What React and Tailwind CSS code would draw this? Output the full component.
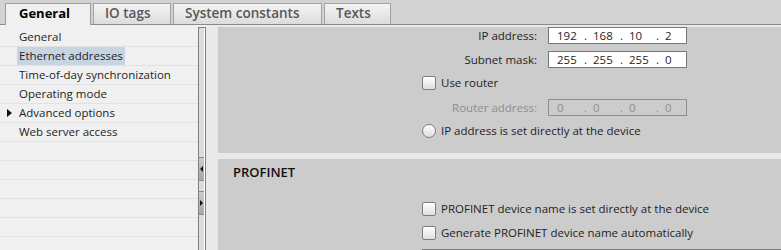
import React from 'react';

const TREE = [
  { label: 'General' },
  { label: 'Ethernet addresses', active: true },
  { label: 'Time-of-day synchronization' },
  { label: 'Operating mode' },
  { label: 'Advanced options', arrow: true },
  { label: 'Web server access' },
  {}, {}, {}, {}, {}, {},
];

const TABS = [
  { label: 'IO tags', w: 'w-[78px]' },
  { label: 'System constants', w: 'w-[149px]' },
  { label: 'Texts', w: 'w-[67px]' },
];

function Checkbox() {
  return <div className="w-[14px] h-[14px] rounded-[2px] border border-[#7d7d7d] bg-gradient-to-b from-white to-[#dedede] shrink-0" />;
}

function Radio() {
  return <div className="w-[14px] h-[14px] rounded-full border border-[#7d7d7d] bg-gradient-to-b from-white to-[#dedede] shrink-0" />;
}

function IpField({ label, parts, disabled }) {
  return (
    <div className="flex items-center h-[17px]">
      <span className={`w-[115px] text-right ${disabled ? 'text-[#8e8e8e]' : 'text-[#1e1e1e]'}`}>{label}</span>
      <div className={`ml-[11px] w-[139px] h-[17px] border flex items-center pl-[8px] ${disabled ? 'border-[#8f8f8f] bg-transparent text-[#8e8e8e]' : 'border-[#777] bg-white text-[#1e1e1e]'}`}>
        {parts.map((p, i) => (
          <div key={i} className="flex w-[36px] shrink-0">
            <span className="w-[27px]">{p}</span>
            {i < 3 && <span>.</span>}
          </div>
        ))}
      </div>
    </div>
  );
}

export default function App() {
  return (
    <div className="w-[781px] h-[250px] overflow-hidden flex flex-col font-['Open_Sans',sans-serif] text-[11.5px] leading-[16px] text-[#1e1e1e] bg-[#f0f0f0]">
      {/* Tabs */}
      <div className="h-[25px] shrink-0 bg-[#d2d2d2] border-b border-[#8a8a8a] flex items-end pl-[5px] gap-[2px]">
        <div className="w-[86px] h-[22px] -mb-px bg-[#f0f0f0] border border-b-0 border-[#9c9c9c] pl-[13px] pb-[3px] flex items-center text-[13px] font-bold text-black">General</div>
        {TABS.map(t => (
          <div key={t.label} className={`${t.w} h-[21px] border border-b-0 border-[#a3a3a3] bg-gradient-to-b from-[#f4f4f4] to-[#dcdcdc] pl-[11px] pb-[2px] flex items-center text-[13.5px] font-semibold text-[#575757]`}>{t.label}</div>
        ))}
      </div>

      <div className="flex flex-1 min-h-0">
        {/* Tree */}
        <div className="w-[198px] shrink-0 bg-[#f0f0f0] pt-[3px]">
          {TREE.map((r, i) => (
            <div key={i} className="h-[19px] border-b border-[#e2e2e2] flex items-stretch relative pl-[17px]">
              {r.arrow && (
                <svg className="absolute left-[7px] top-[5px]" width="5" height="8" viewBox="0 0 5 8"><path d="M0 0 L5 4 L0 8Z" fill="#111" /></svg>
              )}
              {r.label && (
                <span className={`px-[2px] flex items-center ${r.active ? 'bg-[#c7d5e2]' : ''}`}>{r.label}</span>
              )}
            </div>
          ))}
        </div>

        {/* Splitter */}
        <div className="w-[8px] shrink-0 mt-[2px] border-l border-r border-t border-[#7f7f7f] bg-[#dcdcdc] flex">
          <div className="flex-1 flex flex-col border-r border-white">
            <div className="h-[129px]" />
            <div className="h-[24px] border-y border-[#8e8e8e] bg-gradient-to-b from-[#cdcdcd] to-[#a6a6a6] flex items-center pl-[1px]">
              <svg width="3" height="6" viewBox="0 0 3 6"><path d="M3 0 L0 3 L3 6Z" fill="#111" /></svg>
            </div>
            <div className="h-[10px]" />
            <div className="h-[24px] border-y border-[#8e8e8e] bg-gradient-to-b from-[#cdcdcd] to-[#a6a6a6] flex items-center pl-[1px]">
              <svg width="3" height="6" viewBox="0 0 3 6"><path d="M0 0 L3 3 L0 6Z" fill="#111" /></svg>
            </div>
          </div>
        </div>

        {/* Content */}
        <div className="flex-1 bg-[#e9e9e9] pl-[12px] pt-[2px] flex flex-col gap-[6px]">
          <div className="h-[126px] shrink-0 bg-[#cccccc] pl-[204px]">
            <IpField label="IP address:" parts={['192', '168', '10', '2']} />
            <div className="mt-[7px]"><IpField label="Subnet mask:" parts={['255', '255', '255', '0']} /></div>
            <div className="mt-[8px] flex items-center gap-[5px] h-[14px]">
              <Checkbox /><span>Use router</span>
            </div>
            <div className="mt-[9px]"><IpField label="Router address:" parts={['0', '0', '0', '0']} disabled /></div>
            <div className="mt-[8px] flex items-center gap-[5px] h-[14px]">
              <Radio /><span>IP address is set directly at the device</span>
            </div>
          </div>

          <div className="flex-1 bg-[#cccccc] flex flex-col">
            <div className="pl-[15px] pt-[5px] text-[13px] font-semibold text-[#111]">PROFINET</div>
            <div className="pl-[204px] mt-[22px] flex flex-col">
              <div className="flex items-center gap-[5px] h-[14px]"><Checkbox /><span>PROFINET device name is set directly at the device</span></div>
              <div className="mt-[10px] flex items-center gap-[5px] h-[14px]"><Checkbox /><span>Generate PROFINET device name automatically</span></div>
              <div className="mt-[9px] border-t border-[#7d7d7d] h-[20px]" />
            </div>
          </div>
        </div>
      </div>
    </div>
  );
}
